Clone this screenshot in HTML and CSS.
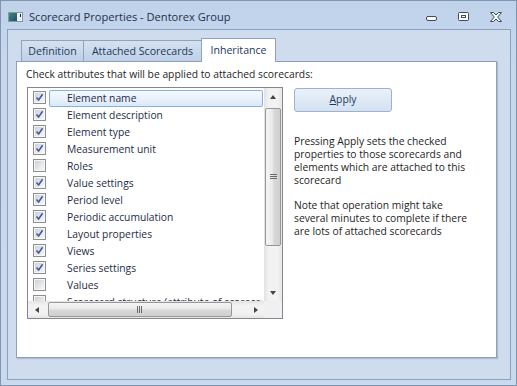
FILE: index.html
```html
<!DOCTYPE html>
<html>
<head>
<meta charset="utf-8">
<link rel="stylesheet" href="styles.css">
</head>
<body>
<svg class="defs" width="0" height="0" aria-hidden="true">
  <defs>
    <linearGradient id="cbg" x1="0" y1="0" x2="1" y2="1">
      <stop offset="0" stop-color="#cdd1d7"/>
      <stop offset="1" stop-color="#f8f8f8"/>
    </linearGradient>
    <linearGradient id="ig" x1="0" y1="0" x2="1" y2="1">
      <stop offset="0" stop-color="#3d8c6c"/>
      <stop offset="1" stop-color="#1f4f7e"/>
    </linearGradient>
    <symbol id="cb-on" viewBox="0 0 13 13">
      <rect x="0.5" y="0.5" width="12" height="12" fill="#f6f6f6" stroke="#8e8f8f"/>
      <rect x="2" y="2" width="9" height="9" fill="url(#cbg)"/>
      <path d="M3.5 6.5 L5.6 9 L9.6 3.2" fill="none" stroke="#3d57a0" stroke-width="1.5"/>
    </symbol>
    <symbol id="cb-off" viewBox="0 0 13 13">
      <rect x="0.5" y="0.5" width="12" height="12" fill="#f6f6f6" stroke="#8e8f8f"/>
      <rect x="2" y="2" width="9" height="9" fill="url(#cbg)"/>
    </symbol>
  </defs>
</svg>
<div class="window">
  <div class="titlebar">
    <svg class="app-icon" viewBox="0 0 15 10">
      <rect x="0.5" y="0.5" width="14" height="9" fill="#eef2f6" stroke="#8a96a6"/>
      <rect x="1" y="1" width="8" height="8" fill="url(#ig)"/>
      <rect x="12" y="2" width="1" height="3" fill="#1a1a1a"/>
    </svg>
    <div class="title">Scorecard Properties - Dentorex Group</div>
    <div class="controls">
      <svg class="ctl" viewBox="0 0 12 10">
        <rect x="0.5" y="4.5" width="10" height="4" rx="1.5" fill="#ffffff" stroke="#3b4b60"/>
      </svg>
      <svg class="ctl" viewBox="0 0 12 10">
        <rect x="0.5" y="0.5" width="10" height="8" rx="1" fill="#ffffff" stroke="#3b4b60"/>
        <rect x="3.5" y="3.5" width="4" height="2" fill="none" stroke="#3b4b60"/>
      </svg>
      <svg class="ctl" viewBox="0 0 12 10">
        <polygon points="0.5,0.5 3.5,0.5 6,3 8.5,0.5 11.5,0.5 7.7,5 11.5,9.5 8.5,9.5 6,7 3.5,9.5 0.5,9.5 4.3,5" fill="#ffffff" stroke="#3b4b60" stroke-linejoin="round"/>
      </svg>
    </div>
  </div>
  <div class="frame">
    <div class="tabs">
      <div class="tab tab-def">Definition</div>
      <div class="tab tab-att">Attached Scorecards</div>
      <div class="tab tab-inh active">Inheritance</div>
    </div>
    <div class="panel">
      <div class="hint">Check attributes that will be applied to attached scorecards:</div>
      <div class="content">
        <div class="listbox">
          <div class="list-main">
            <div class="items">
              <div class="row sel"><svg class="cb"><use href="#cb-on"/></svg><div class="lbl">Element name</div></div>
              <div class="row"><svg class="cb"><use href="#cb-on"/></svg><div class="lbl">Element description</div></div>
              <div class="row"><svg class="cb"><use href="#cb-on"/></svg><div class="lbl">Element type</div></div>
              <div class="row"><svg class="cb"><use href="#cb-on"/></svg><div class="lbl">Measurement unit</div></div>
              <div class="row"><svg class="cb"><use href="#cb-off"/></svg><div class="lbl">Roles</div></div>
              <div class="row"><svg class="cb"><use href="#cb-on"/></svg><div class="lbl">Value settings</div></div>
              <div class="row"><svg class="cb"><use href="#cb-on"/></svg><div class="lbl">Period level</div></div>
              <div class="row"><svg class="cb"><use href="#cb-on"/></svg><div class="lbl">Periodic accumulation</div></div>
              <div class="row"><svg class="cb"><use href="#cb-on"/></svg><div class="lbl">Layout properties</div></div>
              <div class="row"><svg class="cb"><use href="#cb-on"/></svg><div class="lbl">Views</div></div>
              <div class="row"><svg class="cb"><use href="#cb-on"/></svg><div class="lbl">Series settings</div></div>
              <div class="row"><svg class="cb"><use href="#cb-off"/></svg><div class="lbl">Values</div></div>
              <div class="row"><svg class="cb"><use href="#cb-off"/></svg><div class="lbl">Scorecard structure (attribute of scorecard)</div></div>
            </div>
            <div class="vscroll">
              <div class="arrow"><span class="tri-up"></span></div>
              <div class="vthumb">
                <svg class="grip-v" viewBox="0 0 7 6"><path d="M0 0.5H7M0 2.5H7M0 4.5H7" stroke="#6a6a6a" stroke-width="1"/></svg>
              </div>
              <div class="vtrack"></div>
              <div class="arrow"><span class="tri-down"></span></div>
            </div>
          </div>
          <div class="hrow">
            <div class="hscroll">
              <div class="harrow"><span class="tri-left"></span></div>
              <div class="hthumb">
                <svg class="grip-h" viewBox="0 0 6 7"><path d="M0.5 0V7M2.5 0V7M4.5 0V7" stroke="#6a6a6a" stroke-width="1"/></svg>
              </div>
              <div class="htrack"></div>
              <div class="harrow"><span class="tri-right"></span></div>
            </div>
            <div class="corner"></div>
          </div>
        </div>
        <div class="side">
          <button class="apply"><u>A</u>pply</button>
          <p class="para first">Pressing Apply sets the checked<br>properties to those scorecards and<br>elements which are attached to this<br>scorecard</p>
          <p class="para second">Note that operation might take<br>several minutes to complete if there<br>are lots of attached scorecards</p>
        </div>
      </div>
    </div>
  </div>
</div>
</body>
</html>
```
FILE: styles.css
```css
* { box-sizing: border-box; }
html, body { margin: 0; padding: 0; }
body {
  width: 517px;
  height: 386px;
  overflow: hidden;
  font-family: "Open Sans", "Noto Sans", sans-serif;
  font-size: 10.3px;
  color: #1e1e1e;
}
.defs { position: absolute; width: 0; height: 0; overflow: hidden; }

.window {
  width: 517px;
  height: 386px;
  border: 1px solid #8295ae;
  background: linear-gradient(#bfd2ea, #c7d8ed 60px, #c9daee);
  display: flex;
  flex-direction: column;
}

.titlebar {
  height: 28px;
  flex: none;
  display: flex;
  align-items: center;
  padding: 3px 14px 0 7px;
}
.app-icon { width: 15px; height: 10px; flex: none; display: block; }
.title { margin-left: 6px; flex: 1; color: #1e2f4a; font-size: 11.1px; }
.controls { display: flex; align-items: center; }
.ctl { width: 12px; height: 10px; display: block; }
.ctl + .ctl { margin-left: 20px; }

.frame {
  flex: 1;
  margin: 0 5px 5px 6px;
  border: 1px solid #8aa1c0;
  background: #cfdcee;
  padding: 8px 13px 21px 8px;
  display: flex;
  flex-direction: column;
}

.tabs {
  position: relative;
  z-index: 1;
  display: flex;
  align-items: flex-end;
  height: 24px;
  margin-bottom: -1px;
  padding-left: 5px;
  flex: none;
}
.tab {
  height: 21px;
  margin-bottom: 1px;
  margin-left: -1px;
  border: 1px solid #8da3c0;
  border-bottom: none;
  background: linear-gradient(#d5e1f0, #bed0e7);
  color: #1e395b;
  font-size: 10.6px;
  display: flex;
  align-items: center;
  justify-content: center;
  white-space: nowrap;
}
.tab:first-child { margin-left: 0; }
.tab-def { width: 63px; }
.tab-att { width: 119px; }
.tab-inh { width: 75px; }
.tab.active {
  height: 24px;
  margin-bottom: 0;
  background: #ffffff;
  padding-bottom: 2px;
}

.panel {
  flex: 1;
  background: #ffffff;
  border: 1px solid #8aa0bd;
  box-shadow: 1px 1px 1px rgba(70, 90, 120, 0.25);
  padding: 5px 0 0 9px;
  display: flex;
  flex-direction: column;
}
.hint { line-height: 15px; color: #1e1e1e; }
.content { display: flex; align-items: flex-start; margin-top: 5px; padding-left: 1px; }

.listbox {
  width: 256px;
  height: 232px;
  flex: none;
  border: 1px solid #828790;
  display: flex;
  flex-direction: column;
}
.list-main { display: flex; height: 213px; flex: none; }
.items { width: 236px; padding-top: 2px; overflow: hidden; flex: none; }
.row { height: 17px; display: flex; align-items: flex-start; }
.cb { width: 13px; height: 13px; margin: 1px 0 0 5px; flex: none; display: block; }
.lbl {
  flex: 1;
  height: 17px;
  margin: 0 1px 0 3px;
  border: 1px solid transparent;
  border-radius: 2px;
  padding-left: 17px;
  line-height: 15px;
  white-space: nowrap;
  overflow: hidden;
  color: #1e2c44;
}
.row.sel .lbl {
  border-color: #87afdf;
  background: linear-gradient(#f6faff, #dbe8f9);
}

.vscroll {
  width: 18px;
  flex: none;
  background: linear-gradient(to right, #e2e2e2, #f2f2f2 25%, #f2f2f2 75%, #e6e6e6);
  display: flex;
  flex-direction: column;
  align-items: center;
}
.arrow {
  width: 100%;
  height: 17px;
  flex: none;
  display: flex;
  align-items: center;
  justify-content: center;
}
.vtrack { flex: 1; }
.vthumb {
  width: 16px;
  height: 138px;
  margin-top: 3px;
  flex: none;
  border: 1px solid #979797;
  border-radius: 2px;
  background: linear-gradient(to right, #f5f5f5, #eaeaea 45%, #d9d9d9 55%, #cfcfcf);
  display: flex;
  align-items: center;
  justify-content: center;
}
.grip-v { width: 7px; height: 6px; display: block; }

.hrow { display: flex; height: 17px; flex: none; }
.hscroll {
  width: 236px;
  flex: none;
  display: flex;
  align-items: center;
  background: linear-gradient(#e3e3e3, #f2f2f2 25%, #f2f2f2 75%, #e7e7e7);
}
.harrow {
  width: 17px;
  height: 17px;
  flex: none;
  display: flex;
  align-items: center;
  justify-content: center;
}
.htrack { flex: 1; }
.hthumb {
  width: 184px;
  height: 15px;
  margin-left: 3px;
  flex: none;
  border: 1px solid #979797;
  border-radius: 2px;
  background: linear-gradient(#f5f5f5, #eaeaea 45%, #d9d9d9 55%, #cfcfcf);
  display: flex;
  align-items: center;
  justify-content: center;
}
.grip-h { width: 6px; height: 7px; display: block; }
.corner { flex: 1; background: #f0f0f0; }

.tri-up, .tri-down, .tri-left, .tri-right { width: 0; height: 0; display: block; }
.tri-up { border-left: 3.5px solid transparent; border-right: 3.5px solid transparent; border-bottom: 4px solid #444; }
.tri-down { border-left: 3.5px solid transparent; border-right: 3.5px solid transparent; border-top: 4px solid #444; }
.tri-left { border-top: 3.5px solid transparent; border-bottom: 3.5px solid transparent; border-right: 4px solid #444; }
.tri-right { border-top: 3.5px solid transparent; border-bottom: 3.5px solid transparent; border-left: 4px solid #444; }

.side { margin-left: 11px; padding-top: 1px; width: 190px; flex: none; }
.apply {
  display: block;
  width: 98px;
  height: 24px;
  padding: 0 0 2px;
  border: 1px solid #9db2ce;
  border-radius: 3px;
  background: linear-gradient(#eaf1f9, #d4e1f1);
  font: inherit;
  color: #1e395b;
}
.para { margin: 0; line-height: 13px; color: #1e1e1e; white-space: nowrap; }
.para.first { margin-top: 23px; }
.para.second { margin-top: 12px; }
```
